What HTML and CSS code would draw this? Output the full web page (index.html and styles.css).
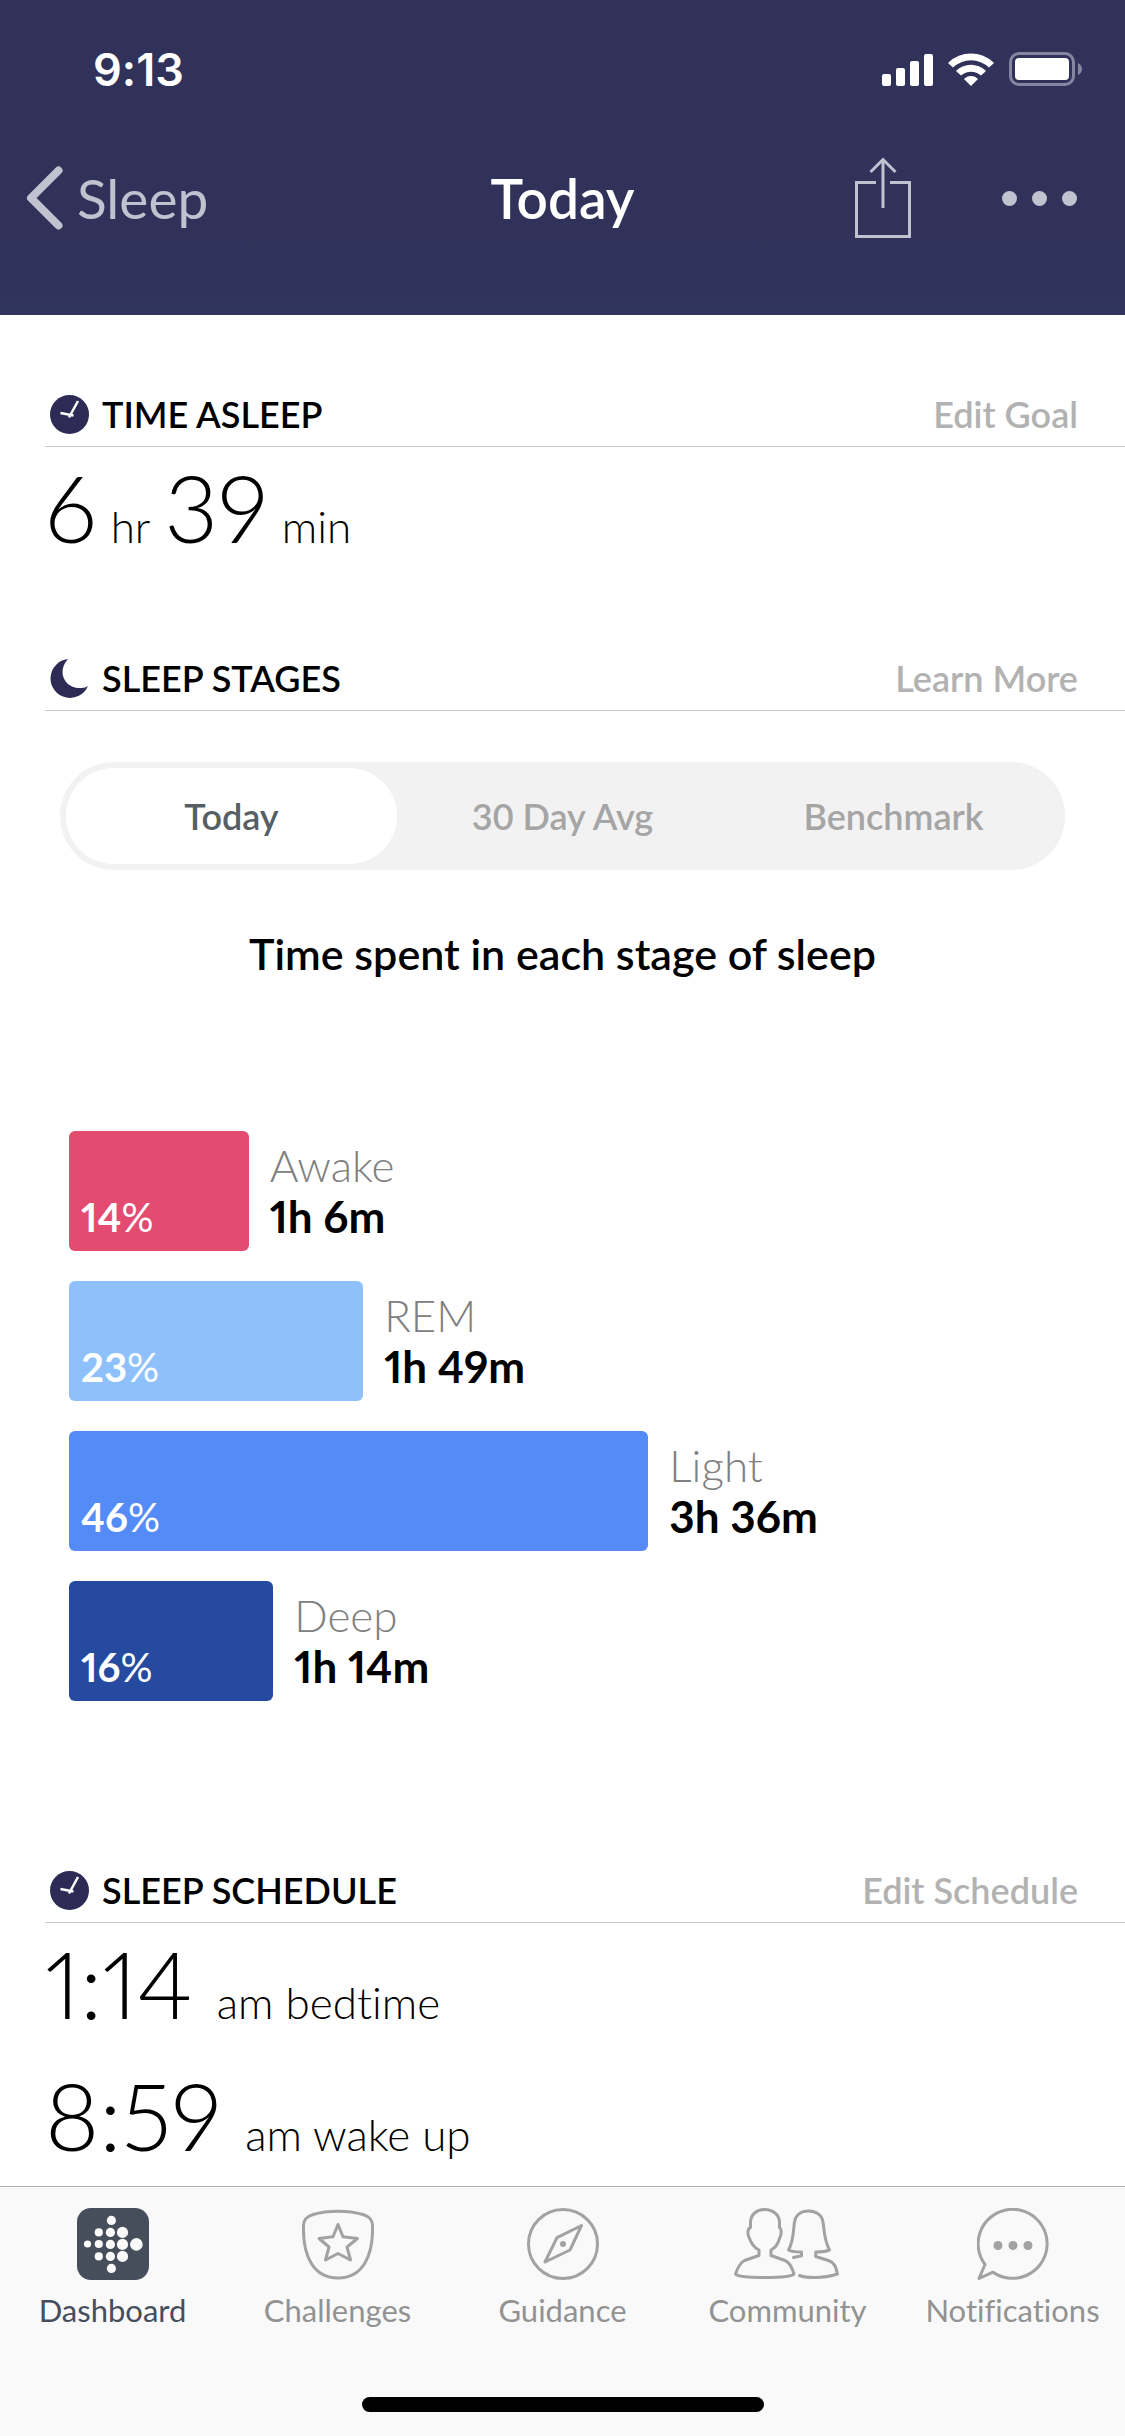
FILE: index.html
```html
<!DOCTYPE html>
<html lang="en">
<head>
<meta charset="utf-8">
<meta name="viewport" content="width=device-width, initial-scale=1.0">
<title>Sleep - Today</title>
<link rel="stylesheet" href="styles.css">
</head>
<body>
<header class="header">
    <div class="status-bar">
        <span class="clock">9:13</span>
        <div class="status-icons">
            <svg width="51" height="33" viewBox="0 0 51 33" fill="#fff" aria-hidden="true">
                <rect x="0" y="21" width="9" height="12" rx="2"/>
                <rect x="14" y="15" width="9" height="18" rx="2"/>
                <rect x="28" y="8" width="9" height="25" rx="2"/>
                <rect x="42" y="1" width="9" height="32" rx="2"/>
            </svg>
            <svg width="46" height="33" viewBox="0 0 46 33" fill="#fff" aria-hidden="true">
                <path d="M.5 9.500A32.500 32.500 0 0 1 45.500 9.500Q46 10 45.500 10.500L41 14.500A26 26 0 0 0 5 14.500L.5 10.500Q0 10 .5 9.500Z"/>
                <path d="M8.500 17.500A21 21 0 0 1 37.500 17.500Q38 18 37.500 18.500L33 22.500A15 15 0 0 0 13 22.500L8.500 18.500Q8 18 8.500 17.500Z"/>
                <path d="M16.500 25.500A10 10 0 0 1 29.500 25.500Q30 26 29.500 26.500L23 33L16.500 26.500Q16 26 16.500 25.500Z"/>
            </svg>
            <svg width="73" height="34" viewBox="0 0 73 34" aria-hidden="true">
                <rect x="1.500" y="1.500" width="63" height="31" rx="8.500" fill="none" stroke="#85869f" stroke-width="3"/>
                <rect x="6" y="6" width="54" height="22" rx="4" fill="#fff"/>
                <path d="M69 11Q73 13 73 17T69 23Z" fill="#85869f"/>
            </svg>
        </div>
    </div>
    <nav class="nav-bar">
        <a class="back" href="#">
            <svg width="37" height="64" viewBox="0 0 37 64" fill="none" stroke="#c1c2d0" stroke-width="8" stroke-linecap="round" stroke-linejoin="round" aria-hidden="true">
                <path d="M32.500 4.500L5 32L32.500 59.500"/>
            </svg>
            <span>Sleep</span>
        </a>
        <h1 class="page-title">Today</h1>
        <div class="nav-actions">
            <button class="icon-button" type="button" aria-label="Share">
                <svg width="58" height="82" viewBox="0 0 58 82" fill="none" stroke="#c1c2d0" stroke-width="3">
                    <path d="M22 25.500H2.500V79.500H55.500V25.500H36"/>
                    <path d="M29 51V2"/>
                    <path d="M16.500 15L29 2.500L41.500 15"/>
                </svg>
            </button>
            <button class="icon-button" type="button" aria-label="More">
                <svg width="75" height="15" viewBox="0 0 75 15" fill="#c1c2d0">
                    <circle cx="7.500" cy="7.500" r="7.500"/>
                    <circle cx="37.500" cy="7.500" r="7.500"/>
                    <circle cx="67.500" cy="7.500" r="7.500"/>
                </svg>
            </button>
        </div>
    </nav>
</header>

<main class="content">
    <section class="section">
        <div class="section-head">
            <svg class="section-icon" viewBox="0 0 39 39" aria-hidden="true">
                <circle cx="19.500" cy="19.500" r="19.500" fill="#2d2b55"/>
                <path d="M28 6L19 22.500M10.500 18L23.500 20.500" stroke="#fff" stroke-width="2.500"/>
            </svg>
            <h2>TIME ASLEEP</h2>
            <a href="#">Edit Goal</a>
        </div>
        <p class="value">6 <small>hr</small> 39 <small>min</small></p>
    </section>

    <section class="section">
        <div class="section-head">
            <svg class="section-icon" viewBox="0 0 39 39" aria-hidden="true">
                <path d="M18 0A19.500 19.500 0 1 0 38 27C35 29 32 29 29 29C20 29 12.500 22 12.500 13C12.500 8 14.500 4 18 0Z" fill="#2d2b55"/>
            </svg>
            <h2>SLEEP STAGES</h2>
            <a href="#">Learn More</a>
        </div>
        <div class="segments" role="group" aria-label="Period">
            <button class="segment active" type="button" aria-pressed="true">Today</button>
            <button class="segment" type="button" aria-pressed="false">30 Day Avg</button>
            <button class="segment" type="button" aria-pressed="false">Benchmark</button>
        </div>
        <h3 class="chart-title">Time spent in each stage of sleep</h3>
        <ul class="chart">
            <li class="stage">
                <div class="bar awake" style="width: 18.2%"><b>14</b>%</div>
                <div class="stage-text"><span>Awake</span><strong>1h 6m</strong></div>
            </li>
            <li class="stage">
                <div class="bar rem" style="width: 29.8%"><b>23</b>%</div>
                <div class="stage-text"><span>REM</span><strong>1h 49m</strong></div>
            </li>
            <li class="stage">
                <div class="bar light" style="width: 58.7%"><b>46</b>%</div>
                <div class="stage-text"><span>Light</span><strong>3h 36m</strong></div>
            </li>
            <li class="stage">
                <div class="bar deep" style="width: 20.7%"><b>16</b>%</div>
                <div class="stage-text"><span>Deep</span><strong>1h 14m</strong></div>
            </li>
        </ul>
    </section>

    <section class="section">
        <div class="section-head">
            <svg class="section-icon" viewBox="0 0 39 39" aria-hidden="true">
                <circle cx="19.500" cy="19.500" r="19.500" fill="#2d2b55"/>
                <path d="M28 6L19 22.500M10.500 18L23.500 20.500" stroke="#fff" stroke-width="2.500"/>
            </svg>
            <h2>SLEEP SCHEDULE</h2>
            <a href="#">Edit Schedule</a>
        </div>
        <p class="value time">1:14 <small>am bedtime</small></p>
        <p class="value time">8:59 <small>am wake up</small></p>
    </section>
</main>

<footer class="tab-bar">
    <nav class="tabs">
        <a class="tab current" href="#">
            <svg width="72" height="72" viewBox="0 0 72 72" aria-hidden="true">
                <rect width="72" height="72" rx="14" fill="#464e5c"/>
                <g fill="#fafafa">
                    <circle cx="10.500" cy="36" r="3.600"/>
                    <circle cx="21.800" cy="24.400" r="4.100"/>
                    <circle cx="21.800" cy="36" r="4.100"/>
                    <circle cx="21.800" cy="48.400" r="4.100"/>
                    <circle cx="34.400" cy="12.400" r="4.600"/>
                    <circle cx="33.400" cy="24.400" r="4.600"/>
                    <circle cx="33.400" cy="36.400" r="4.600"/>
                    <circle cx="33.400" cy="48.400" r="4.600"/>
                    <circle cx="34.400" cy="60.400" r="4.600"/>
                    <circle cx="45.500" cy="24.400" r="5.600"/>
                    <circle cx="45.500" cy="36.400" r="5.600"/>
                    <circle cx="45.500" cy="48.400" r="5.600"/>
                    <circle cx="59.400" cy="36.400" r="6.300"/>
                </g>
            </svg>
            <span>Dashboard</span>
        </a>
        <a class="tab" href="#">
            <svg class="line-icon" width="72" height="72" viewBox="0 0 72 72" aria-hidden="true">
                <path d="M11 6.500C26 2 46 2 61 6.500C67 8.500 70 11 70.500 17C71.500 49 60 70 36 70C12 70 .5 49 1.500 17C2 11 5 8.500 11 6.500Z"/>
                <path d="M36 16.500L41 28.800L55.500 30.500L45 39L48.500 52L36 45.500L23.500 52L27 39L17 30.500L31 28.800Z"/>
            </svg>
            <span>Challenges</span>
        </a>
        <a class="tab" href="#">
            <svg class="line-icon" width="72" height="72" viewBox="0 0 72 72" aria-hidden="true">
                <circle cx="36" cy="36" r="34.500"/>
                <path d="M54.500 17.500L43 42L18 54L30 29.700Z"/>
                <circle class="dot" cx="36" cy="36" r="3"/>
            </svg>
            <span>Guidance</span>
        </a>
        <a class="tab" href="#">
            <svg class="line-icon" width="108" height="72" viewBox="0 0 108 72" aria-hidden="true">
                <path d="M16.500 19.500V14C17 6 23 1.500 30.700 1.500S45 6 45.500 14V19.500C48 21 47.500 27 45.500 30.500C44 36 42 39.500 37 42V47.500L51 52.500C56 54.500 58 59 60 66C58 68.500 47 69.500 31 69.500S3.500 68.500 1.500 66C3.500 60 5.500 55 10.500 52.500L25 47.500V42C20 39.500 17 35 15.500 30.500C13.500 27 13 21 16.500 19.500Z"/>
                <path d="M59.500 49.500L67.500 47.700V44C62 44 57 43.500 54.500 42C60 32 59 23 60.500 14C61.500 7 67 3 74.500 3S88 7 89 14C90.500 23 90 32 95.500 42C92 43.500 87 44 81.700 44V48.500L94.500 52.500C100.500 54.500 102 59 103.500 66C96 68.500 90 69.500 80 69.500C74 69.500 69 69 65.500 67.500"/>
            </svg>
            <span>Community</span>
        </a>
        <a class="tab" href="#">
            <svg class="line-icon" width="72" height="72" viewBox="0 0 72 72" aria-hidden="true">
                <path d="M8 56.500A34.500 34.500 0 1 1 16 64.200L2 70.500Z"/>
                <circle class="dot" cx="21" cy="37.500" r="4.500"/>
                <circle class="dot" cx="36" cy="37.500" r="4.500"/>
                <circle class="dot" cx="51" cy="37.500" r="4.500"/>
            </svg>
            <span>Notifications</span>
        </a>
    </nav>
    <div class="home-indicator"></div>
</footer>
</body>
</html>
```
FILE: styles.css
```css
* {
    box-sizing: border-box;
}

body {
    margin: 0;
    min-height: 100vh;
    display: flex;
    flex-direction: column;
    background: #fff;
    color: #000;
    font-family: Lato, "Open Sans", sans-serif;
    font-variant-ligatures: none;
    font-variant-numeric: proportional-nums;
}

h1, h2, h3, p, ul {
    margin: 0;
    padding: 0;
}

a {
    text-decoration: none;
}

button {
    border: 0;
    padding: 0;
    background: none;
    font-family: inherit;
}

svg {
    display: block;
    flex-shrink: 0;
}

/* header */
.header {
    padding: 39px 0 72px;
    background: linear-gradient(#30325a 75%, #30355d);
    color: #fff;
}

.status-bar {
    display: flex;
    align-items: center;
    justify-content: space-between;
    height: 60px;
    padding: 0 43px 0 93px;
}

.clock {
    font-family: Inter, sans-serif;
    font-size: 45px;
    font-weight: 600;
}

.status-icons {
    display: flex;
    align-items: center;
    gap: 15px;
}

.nav-bar {
    display: grid;
    grid-template-columns: 1fr auto 1fr;
    align-items: center;
    height: 90px;
    margin-top: 54px;
}

.back {
    display: flex;
    align-items: center;
    gap: 14px;
    padding-left: 26px;
    color: #c1c2d0;
    font-size: 55px;
}

.page-title {
    font-size: 55px;
    font-weight: 600;
}

.nav-actions {
    display: flex;
    align-items: center;
    justify-content: flex-end;
    gap: 90px;
    padding-right: 48px;
}

/* sections */
.content {
    flex: 1;
    padding-top: 69px;
}

.section {
    margin-bottom: 87px;
}

.section:last-child {
    margin-bottom: 0;
}

.section-head {
    display: flex;
    align-items: center;
    height: 63px;
    margin-left: 45px;
    padding: 0 47px 2px 5px;
    border-bottom: 1px solid #c8c8c8;
    font-size: 36px;
}

.section-icon {
    width: 39px;
    height: 39px;
    margin-right: 13px;
}

.section-head h2 {
    flex: 1;
    font-size: 36px;
    font-weight: 600;
}

.section-head a {
    color: #b2b2b2;
    font-weight: 600;
}

.value {
    display: flex;
    align-items: baseline;
    gap: 14px;
    padding: 6px 45px 0;
    font-size: 93px;
    font-weight: 300;
    line-height: 108px;
}

.value.time {
    gap: 24px;
}

.value + .value {
    margin-top: 18px;
}

.value small {
    font-size: 44px;
    line-height: 54px;
}

/* sleep stages */
.segments {
    display: grid;
    grid-template-columns: repeat(3, 1fr);
    height: 108px;
    margin: 51px 60px 0;
    padding: 6px;
    border-radius: 54px;
    background: #f2f2f2;
}

.segment {
    border-radius: 48px;
    color: #a5a5a5;
    font-size: 36px;
    font-weight: 600;
}

.segment.active {
    background: #fff;
    color: #565f66;
}

.chart-title {
    margin-top: 60px;
    text-align: center;
    font-size: 43px;
    font-weight: 600;
    line-height: 48px;
}

.chart {
    display: grid;
    gap: 30px;
    margin: 153px 69px 159px;
    list-style: none;
}

.stage {
    display: flex;
    align-items: center;
    gap: 21px;
}

.bar {
    height: 120px;
    padding: 62px 12px 0;
    border-radius: 6px;
    color: #fff;
    font-size: 40px;
    line-height: 48px;
}

.bar b {
    font-weight: 700;
}

.awake {
    background: #e34c70;
}

.rem {
    background: #8ec1fc;
}

.light {
    background: #548bf7;
}

.deep {
    background: #264a9f;
}

.stage-text {
    display: flex;
    flex-direction: column;
    font-size: 44px;
    line-height: 51px;
}

.stage-text span {
    color: #808080;
    font-weight: 300;
}

.stage-text strong {
    font-weight: 700;
}

/* tab bar */
.tab-bar {
    padding: 21px 0 24px;
    border-top: 1px solid #b2b2b2;
    background: #f9f9f9;
}

.tabs {
    display: grid;
    grid-template-columns: repeat(5, 1fr);
}

.tab {
    display: flex;
    flex-direction: column;
    align-items: center;
    gap: 12px;
    color: #929292;
    font-size: 31px;
    line-height: 36px;
}

.tab.current {
    color: #464e5c;
}

.line-icon {
    fill: none;
    stroke: #a2a2a2;
    stroke-width: 3;
    stroke-linejoin: round;
    stroke-linecap: round;
}

.line-icon .dot {
    fill: #a2a2a2;
    stroke: none;
}

.home-indicator {
    width: 402px;
    height: 15px;
    margin: 69px auto 0;
    border-radius: 8px;
    background: #000;
}
```
